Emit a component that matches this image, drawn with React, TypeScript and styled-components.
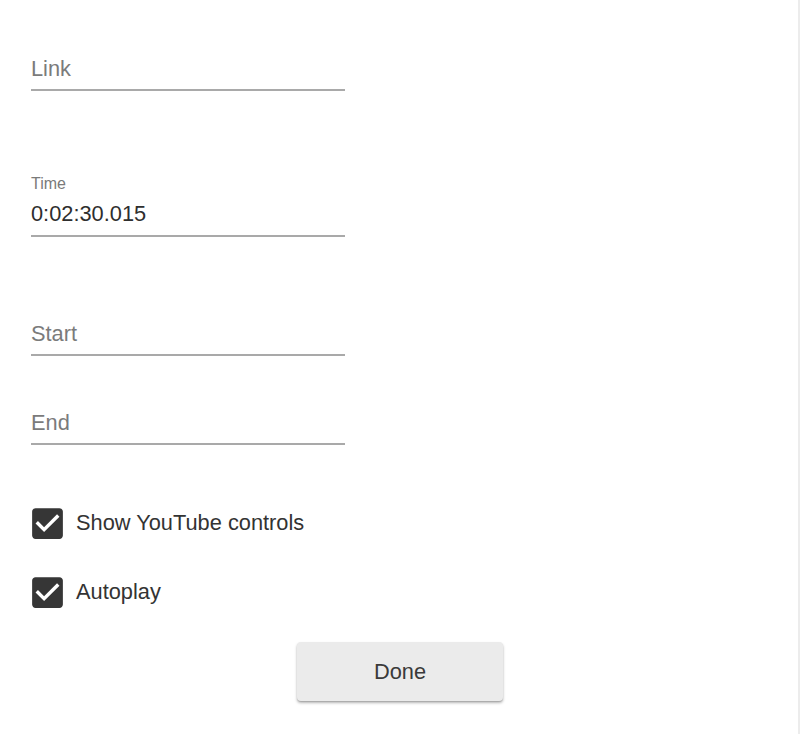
import React from "react";
import styled, { createGlobalStyle } from "styled-components";

const Global = createGlobalStyle`
  html, body { margin: 0; padding: 0; background: #ffffff; }
  body { font-family: "Liberation Sans", Arial, Helvetica, sans-serif; }
  * { box-sizing: border-box; }
`;

const Page = styled.div`
  width: 800px;
  height: 734px;
  border-right: 2px solid #ececec;
  padding: 28px 0 0 31px;
  display: flex;
  flex-direction: column;
`;

const Field = styled.div<{ $gap: number }>`
  width: 314px;
  margin-top: ${(p) => p.$gap}px;
  display: flex;
  flex-direction: column;
`;

const SmallLabel = styled.div`
  height: 20px;
  line-height: 20px;
  font-size: 16px;
  color: #7a7a7a;
`;

const InputRow = styled.div<{ $empty?: boolean }>`
  font-size: 21.8px;
  line-height: 26px;
  height: 43px;
  padding: ${(p) => (p.$empty ? "8px 0 7px" : "7px 0 8px")};
  color: ${(p) => (p.$empty ? "#7b7b7b" : "#2e2e2e")};
  border-bottom: 2px solid #a9a9a9;
`;

const CheckRow = styled.label<{ $gap: number }>`
  display: flex;
  align-items: center;
  height: 30px;
  margin-top: ${(p) => p.$gap}px;
  font-size: 21.8px;
  color: #333333;
  cursor: pointer;
`;

const BoxIcon = styled.svg`
  width: 41px;
  height: 41px;
  margin-left: -4px;
  margin-right: 8px;
  flex: none;
`;

const ButtonBar = styled.div`
  display: flex;
  justify-content: center;
  margin-top: 35px;
  margin-left: -31px;
  width: 800px;
`;

const DoneButton = styled.button`
  width: 206px;
  height: 59px;
  border: none;
  border-radius: 4px;
  background: #ebebeb;
  box-shadow: 0 2px 3px rgba(0, 0, 0, 0.28), 0 1px 1px rgba(0, 0, 0, 0.12);
  font-family: "Liberation Sans", Arial, sans-serif;
  font-size: 21.8px;
  color: #3a3a3a;
  padding: 0;
  cursor: pointer;
`;

const Checked = () => (
  <BoxIcon viewBox="0 0 24 24">
    <path
      fill="#363636"
      d="M19 3H5c-1.11 0-2 .9-2 2v14c0 1.1.89 2 2 2h14c1.11 0 2-.9 2-2V5c0-1.1-.89-2-2-2zm-9 14l-5-5 1.41-1.41L10 14.17l7.59-7.59L19 8l-9 9z"
    />
  </BoxIcon>
);

export default function App() {
  return (
    <>
      <Global />
      <Page>
        <Field $gap={0}>
          <SmallLabel />
          <InputRow $empty>Link</InputRow>
        </Field>
        <Field $gap={83}>
          <SmallLabel>Time</SmallLabel>
          <InputRow>0:02:30.015</InputRow>
        </Field>
        <Field $gap={56}>
          <SmallLabel />
          <InputRow $empty>Start</InputRow>
        </Field>
        <Field $gap={26}>
          <SmallLabel />
          <InputRow $empty>End</InputRow>
        </Field>
        <CheckRow $gap={63}>
          <Checked />
          Show YouTube controls
        </CheckRow>
        <CheckRow $gap={39}>
          <Checked />
          Autoplay
        </CheckRow>
        <ButtonBar>
          <DoneButton>Done</DoneButton>
        </ButtonBar>
      </Page>
    </>
  );
}
